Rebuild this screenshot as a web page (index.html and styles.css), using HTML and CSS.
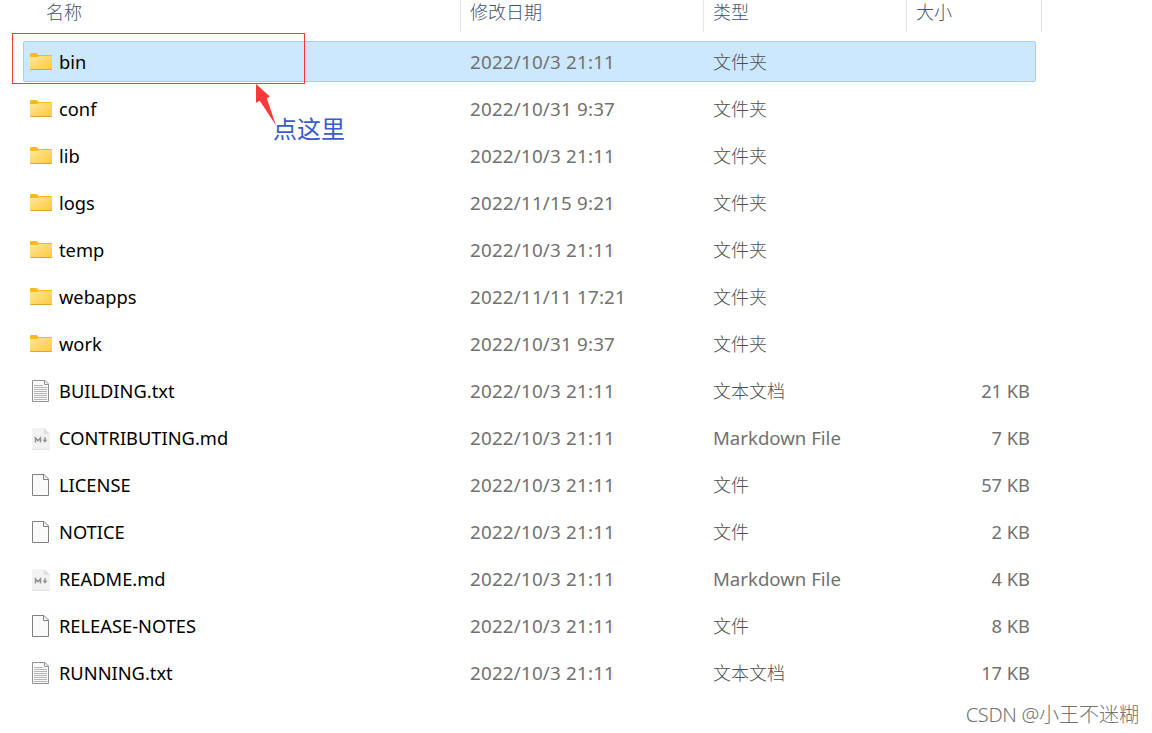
FILE: index.html
```html
<!DOCTYPE html>
<html lang="zh-CN">
<head>
    <meta charset="UTF-8">
    <meta name="viewport" content="width=device-width, initial-scale=1.0">
    <title>文件列表</title>
    <link rel="stylesheet" href="styles.css">
</head>
<body>
    <!-- 图标 -->
    <svg class="icon-defs" width="0" height="0">
        <defs>
            <linearGradient id="folderFill" x1="0" y1="0" x2="1" y2="1">
                <stop offset="0" stop-color="#ffe69c"/>
                <stop offset="1" stop-color="#ffc93a"/>
            </linearGradient>
            <symbol id="folder" viewBox="0 0 22 23">
                <path d="M0 4.2Q0 3 1.2 3H6.6L8.6 5H21Q22 5 22 6V12H0Z" fill="#fbb91c"/>
                <path d="M0 7H7.2L9 6H22V19Q22 20 21 20H1Q0 20 0 19Z" fill="url(#folderFill)"/>
                <path d="M0 19H22Q22 20 21 20H1Q0 20 0 19Z" fill="#e0a52c"/>
            </symbol>
            <symbol id="blank" viewBox="0 0 22 23">
                <path d="M2.5 1.5H14L18.5 6V22.5H2.5Z" fill="#fafafa" stroke="#808080"/>
                <path d="M13.5 1.5V6.5H18.5" fill="none" stroke="#808080"/>
            </symbol>
            <symbol id="text" viewBox="0 0 22 23">
                <path d="M2.5 1.5H15L18.5 5V22.5H2.5Z" fill="#fafafa" stroke="#929292"/>
                <path d="M14.5 1.5V5.5H18.5" fill="none" stroke="#929292"/>
                <path d="M4 6.5H13M4 8.5H17M4 10.5H17M4 12.5H17M4 14.5H17M4 16.5H17M4 18.5H17M4 20.5H17" stroke="#b4b4b4"/>
            </symbol>
            <symbol id="markdown" viewBox="0 0 22 23" overflow="visible">
                <path d="M3.5 2H14L20 8V22.5Q20 24 18.5 24H3.5Q2 24 2 22.5V3.5Q2 2 3.5 2Z" fill="#f2f2f2"/>
                <path d="M14 2L20 8H15.2Q14 8 14 6.8Z" fill="#dedede"/>
                <path d="M2.3 23.3H19.7" stroke="#e2e2e2"/>
                <path d="M5.5 16.5V12L8 14.7L10.5 12V16.5" fill="none" stroke="#929292" stroke-width="1.5"/>
                <path d="M15 11.3V15" stroke="#929292" stroke-width="1.6"/>
                <path d="M12.5 13.7H17.5L15 16.8Z" fill="#929292"/>
            </symbol>
        </defs>
    </svg>

    <div class="explorer">
        <div class="header">
            <div class="th">名称</div>
            <div class="th">修改日期</div>
            <div class="th">类型</div>
            <div class="th">大小</div>
        </div>
        <div class="list" id="list"></div>
    </div>

    <!-- 标注 -->
    <div class="mark-box"></div>
    <svg class="mark-arrow" width="22" height="43" viewBox="0 0 22 43">
        <path d="M1 0L14.8 12.6L11.8 14.2L21 41.4L4.8 16.7L1 18.8Z" fill="#fc3838"/>
    </svg>
    <div class="mark-text">点这里</div>
    <div class="watermark"><span>CSDN @</span>小王不迷糊</div>

    <script>
        const files = [
            ['folder', 'bin', '2022/10/3 21:11', '文件夹', ''],
            ['folder', 'conf', '2022/10/31 9:37', '文件夹', ''],
            ['folder', 'lib', '2022/10/3 21:11', '文件夹', ''],
            ['folder', 'logs', '2022/11/15 9:21', '文件夹', ''],
            ['folder', 'temp', '2022/10/3 21:11', '文件夹', ''],
            ['folder', 'webapps', '2022/11/11 17:21', '文件夹', ''],
            ['folder', 'work', '2022/10/31 9:37', '文件夹', ''],
            ['text', 'BUILDING.txt', '2022/10/3 21:11', '文本文档', '21 KB'],
            ['markdown', 'CONTRIBUTING.md', '2022/10/3 21:11', 'Markdown File', '7 KB'],
            ['blank', 'LICENSE', '2022/10/3 21:11', '文件', '57 KB'],
            ['blank', 'NOTICE', '2022/10/3 21:11', '文件', '2 KB'],
            ['markdown', 'README.md', '2022/10/3 21:11', 'Markdown File', '4 KB'],
            ['blank', 'RELEASE-NOTES', '2022/10/3 21:11', '文件', '8 KB'],
            ['text', 'RUNNING.txt', '2022/10/3 21:11', '文本文档', '17 KB']
        ];

        document.getElementById('list').innerHTML = files.map(([icon, name, date, type, size], i) => `
            <div class="row ${i === 0 ? 'selected' : ''}">
                <div class="name"><svg class="icon"><use href="#${icon}"/></svg><span>${name}</span></div>
                <div class="date">${date}</div>
                <div class="type ${icon === 'markdown' ? 'latin' : ''}">${type}</div>
                <div class="size">${size}</div>
            </div>
        `).join('');
    </script>
</body>
</html>
```
FILE: styles.css
```css
body {
    margin: 0;
    height: 733px;
    position: relative;
    overflow: hidden;
    background: #fff;
    font-family: "Noto Sans", "Noto Sans CJK SC", sans-serif;
    font-size: 18px;
    line-height: 24px;
    color: #717171;
}

.icon-defs {
    position: absolute;
}

.header {
    display: grid;
    grid-template-columns: 415px 243px 203px 135px;
    height: 32px;
    padding-left: 46px;
    color: #3f5470;
    font-weight: 300;
}

.th {
    box-sizing: border-box;
    border-right: 1px solid #e5e5e5;
    padding-left: 9px;
}

.th:first-child {
    padding-left: 0;
}

.list {
    display: flex;
    flex-direction: column;
    gap: 6px;
    width: 1013px;
    margin: 9px 0 0 23px;
}

.row {
    box-sizing: border-box;
    display: grid;
    grid-template-columns: 446px 243px 203px 1fr;
    align-items: center;
    height: 41px;
    border: 1px solid transparent;
    border-radius: 2px;
}

.row.selected {
    background: #cce8ff;
    border-color: #99d1ff;
}

.name {
    display: flex;
    align-items: center;
    gap: 7px;
    padding-left: 6px;
    font-size: 18.3px;
    color: #000;
}

.icon {
    width: 22px;
    height: 23px;
    overflow: visible;
}

.date {
    font-size: 18.8px;
    letter-spacing: 0.2px;
}

.type {
    font-weight: 300;
    color: #505050;
}

.type.latin {
    font-size: 18.6px;
    font-weight: 400;
    color: #717171;
}

.size {
    font-size: 18.3px;
    text-align: right;
    padding-right: 5px;
}

/* 红框、箭头和文字 */
.mark-box {
    position: absolute;
    left: 12px;
    top: 33px;
    box-sizing: border-box;
    width: 293px;
    height: 51px;
    border: 1px solid #fc3838;
}

.mark-arrow {
    position: absolute;
    left: 255px;
    top: 84px;
}

.mark-text {
    position: absolute;
    left: 273px;
    top: 113px;
    font-size: 24px;
    line-height: 32px;
    color: #3a5bd0;
}

.watermark {
    position: absolute;
    right: 13px;
    bottom: 4px;
    font-size: 20px;
    line-height: 28px;
    font-weight: 300;
    color: #727272;
}

.watermark span {
    letter-spacing: -0.3px;
}
```
